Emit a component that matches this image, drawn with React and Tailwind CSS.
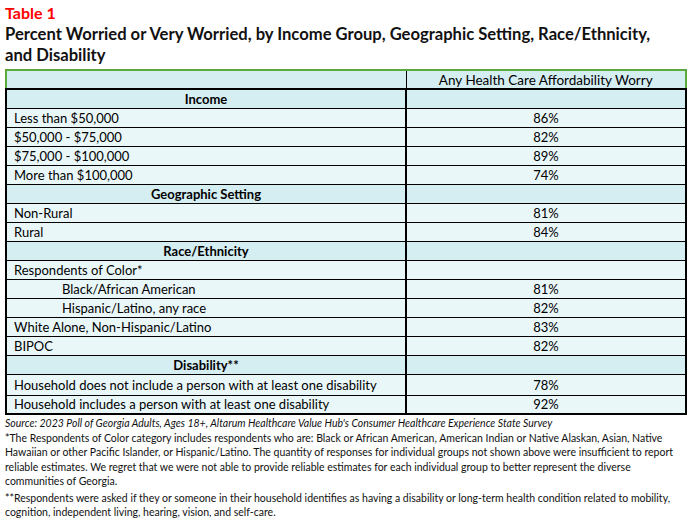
const rows = [
  { type: "section", label: "Income" },
  { label: "Less than $50,000", value: "86%" },
  { label: "$50,000 - $75,000", value: "82%" },
  { label: "$75,000 - $100,000", value: "89%" },
  { label: "More than $100,000", value: "74%" },
  { type: "section", label: "Geographic Setting" },
  { label: "Non-Rural", value: "81%" },
  { label: "Rural", value: "84%" },
  { type: "section", label: "Race/Ethnicity" },
  { label: "Respondents of Color*", value: "" },
  { label: "Black/African American", value: "81%", indent: true },
  { label: "Hispanic/Latino, any race", value: "82%", indent: true },
  { label: "White Alone, Non-Hispanic/Latino", value: "83%" },
  { label: "BIPOC", value: "82%" },
  { type: "section", label: "Disability**" },
  { label: "Household does not include a person with at least one disability", value: "78%", tall: true },
  { label: "Household includes a person with at least one disability", value: "92%" },
];

export default function App() {
  return (
    <div className="w-[693px] h-[520px] bg-white text-black overflow-hidden px-[5px] pt-[2px]" style={{ fontFamily: "Lato, 'Noto Sans', sans-serif" }}>
      <h1 className="text-[16px] font-bold text-[#ff0000] leading-[22px]">Table 1</h1>
      <h2 className="text-[16.6px] font-bold leading-[21px] text-[#111]">
        Percent Worried or Very Worried, by Income Group, Geographic Setting, Race/Ethnicity,
        <br />
        and Disability
      </h2>
      <table className="mt-[3px] w-[682px] border-collapse text-[13px] leading-[16px]">
        <thead>
          <tr className="bg-[#d5eef2]">
            <th className="w-[400px] h-[19px] border-2 border-r border-[#5aab3c] border-r-black border-b-black"></th>
            <th className="h-[19px] border-2 border-l border-[#5aab3c] border-l-black border-b-black font-normal text-center text-[13.5px]">
              Any Health Care Affordability Worry
            </th>
          </tr>
        </thead>
        <tbody>
          {rows.map((r, i) =>
            r.type === "section" ? (
              <tr key={i} className="bg-[#d5eef2]">
                <td className="h-[19px] border-x-2 border-y border-black text-center font-bold">{r.label}</td>
                <td className="h-[19px] border-x-2 border-y border-black"></td>
              </tr>
            ) : (
              <tr key={i} className="bg-[#eaf7f9]">
                <td className={`${r.tall ? "h-[21px]" : "h-[19px]"} border-x-2 border-y border-black ${r.indent ? "pl-[55px]" : "pl-[7px]"}`}>
                  {r.label}
                </td>
                <td className={`${r.tall ? "h-[21px]" : "h-[19px]"} border-x-2 border-y border-black text-center`}>{r.value}</td>
              </tr>
            )
          )}
          <tr>
            <td className="border-t-2 border-black p-0"></td>
            <td className="border-t-2 border-black p-0"></td>
          </tr>
        </tbody>
      </table>
      <div className="mt-[1px] text-[10.5px] leading-[14.5px] text-[#111]">
        <p className="italic">Source: 2023 Poll of Georgia Adults, Ages 18+, Altarum Healthcare Value Hub's Consumer Healthcare Experience State Survey</p>
        <p>
          *The Respondents of Color category includes respondents who are: Black or African American, American Indian or Native Alaskan, Asian, Native
          Hawaiian or other Pacific Islander, or Hispanic/Latino. The quantity of responses for individual groups not shown above were insufficient to report
          reliable estimates. We regret that we were not able to provide reliable estimates for each individual group to better represent the diverse
          communities of Georgia.
        </p>
        <p className="mt-[2px]">
          **Respondents were asked if they or someone in their household identifies as having a disability or long-term health condition related to mobility,
          cognition, independent living, hearing, vision, and self-care.
        </p>
      </div>
    </div>
  );
}
